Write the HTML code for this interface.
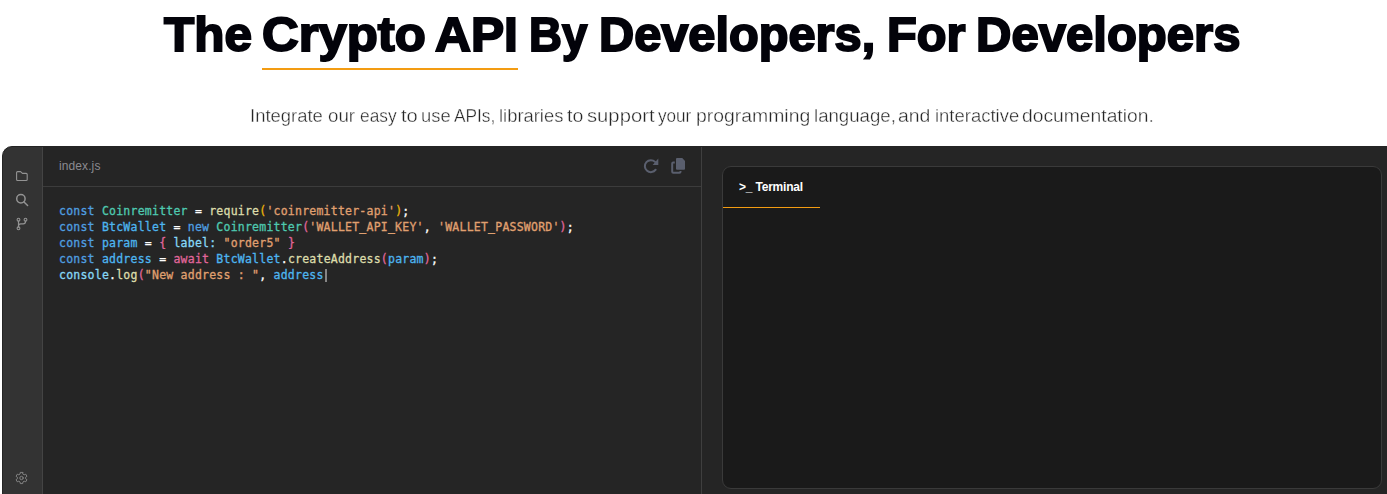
<!DOCTYPE html>
<html lang="en">
<head>
<meta charset="utf-8">
<title>The Crypto API By Developers, For Developers</title>
<style>
*{box-sizing:border-box;margin:0;padding:0}
html,body{width:1387px;height:494px;overflow:hidden;background:#fff}
body{position:relative;font-family:"Liberation Sans",sans-serif}
h1{will-change:transform;position:absolute;left:0;top:4.1px;width:1387px;height:60px;font-weight:700;font-size:49px;line-height:60px;color:#03030a;white-space:nowrap;-webkit-text-stroke:2px #03030a}
h1 span{position:absolute;top:0;display:block;transform-origin:0 47.43px}
.uline{position:absolute;left:262px;top:68px;width:256px;height:2px;background:#f39c12}
p.sub{will-change:transform;position:absolute;left:0;top:104.3px;width:1387px;height:24px;font-size:17.6px;line-height:24px;color:#262626;white-space:nowrap;-webkit-text-stroke:0.35px #fff}
p.sub span{position:absolute;top:0;display:block;transform-origin:0 0}
.panel{position:absolute;left:2px;top:146px;width:1390px;height:360px;background:#252525;border-top-left-radius:10px;overflow:hidden;border:1px solid #242424}
.side{position:absolute;left:0;top:0;width:40px;height:100%;background:#333333;border-right:1px solid #444}
svg.ico{position:absolute;left:-3px;top:-1px;display:block}
svg.hic{position:absolute;left:635px;top:3px;display:block}
.head{position:absolute;left:40px;top:0;width:658px;height:40px;border-bottom:1px solid #3c3c3c}
.head .fn{position:absolute;left:16px;top:11px;font-size:12px;line-height:16px;color:#8b8b90;letter-spacing:0.1px}
.vdiv{position:absolute;left:698px;top:0;width:1px;height:100%;background:#3f3f3f}
pre.code{position:absolute;left:56px;top:56px;font-family:"DejaVu Sans Mono","Liberation Mono",monospace;font-size:11.5px;letter-spacing:0.227px;line-height:16px;color:#ffffff;white-space:pre;-webkit-text-stroke-width:0.3px}
.k{color:#4f9fe0}.c{color:#4ec9b0}.v{color:#4db5f0}.f{color:#dcdcaa}.s{color:#e0a070}.y{color:#eab308}.p{color:#e0659a}.l{color:#86d8f7}.a{color:#e0659a}
.cur{display:inline-block;width:2px;height:13px;background:#858585;vertical-align:-3px;margin-left:1.5px}
.term{position:absolute;left:719px;top:19px;width:660px;height:323px;background:#1a1a1a;border:1px solid #3a3a3a;border-radius:9px;overflow:hidden}
.tab{position:absolute;left:0;top:0;width:97px;height:41px;border-bottom:1px solid #f39c12;color:#fff;font-size:12px;font-weight:700;line-height:16px;padding:12px 0 0 16px;white-space:nowrap;letter-spacing:-0.2px}
</style>
</head>
<body>
<h1><span style="left:164.10px;transform:scaleX(1.0101)">The</span> <span style="left:261.77px;transform:scaleX(1.0376)">Crypto</span> <span style="left:434.62px;transform:scaleX(1.0143)">API</span> <span style="left:528.74px;transform:scaleX(0.9302)">By</span> <span style="left:599.48px;transform:scaleX(0.9941)">Developers,</span> <span style="left:886.83px;transform:scaleX(0.9942)">For</span> <span style="left:976.04px;transform:scaleX(1.0010)">Developers</span></h1>
<div class="uline"></div>
<p class="sub"><span style="left:250.40px;transform:scaleX(1.0492)">Integrate</span> <span style="left:328.11px;transform:scaleX(1.0646)">our</span> <span style="left:359.82px;transform:scaleX(0.9855)">easy</span> <span style="left:400.95px;transform:scaleX(1.1451)">to</span> <span style="left:421.04px;transform:scaleX(1.0450)">use</span> <span style="left:454.36px;transform:scaleX(0.9823)">APIs,</span> <span style="left:498.85px;transform:scaleX(1.0447)">libraries</span> <span style="left:567.45px;transform:scaleX(1.1090)">to</span> <span style="left:587.15px;transform:scaleX(1.1503)">support</span> <span style="left:657.84px;transform:scaleX(0.9722)">your</span> <span style="left:695.50px;transform:scaleX(1.1021)">programming</span> <span style="left:813.72px;transform:scaleX(1.0586)">language,</span> <span style="left:897.81px;transform:scaleX(1.1026)">and</span> <span style="left:934.70px;transform:scaleX(1.0494)">interactive</span> <span style="left:1022.22px;transform:scaleX(1.0953)">documentation.</span></p>
<div class="panel">
  <div class="side"></div>
  <svg class="ico" width="45" height="348" viewBox="0 146 45 348" fill="none" stroke="#939393" stroke-width="1.1" stroke-linecap="round" stroke-linejoin="round">
<path d="M16.6 172.6 Q16.6 171.6 17.6 171.6 H20.6 L22.4 173.4 H26.2 Q27.2 173.4 27.2 174.4 V179.5 Q27.2 180.5 26.2 180.5 H17.6 Q16.6 180.5 16.6 179.5 Z"/>
<circle cx="20.9" cy="198.8" r="4.2" stroke-width="1.5"/><path d="M24 202 L27.6 205.5" stroke-width="1.5"/>
<circle cx="18.5" cy="219.7" r="1.4" stroke-width="1.1"/><circle cx="25.5" cy="219.7" r="1.4" stroke-width="1.1"/><circle cx="18.5" cy="228.3" r="1.4" stroke-width="1.1"/>
<path d="M18.5 221 V227 M25.5 221 V221.6 Q25.5 223.9 23.2 223.9 H20.8 Q18.5 223.9 18.5 226" stroke-width="1.2"/>
<path d="M22.69 472.42 L20.31 472.42 L20.06 474.05 L18.80 474.78 L17.26 474.19 L16.08 476.24 L17.36 477.27 L17.36 478.73 L16.08 479.76 L17.26 481.81 L18.80 481.22 L20.06 481.95 L20.31 483.58 L22.69 483.58 L22.94 481.95 L24.20 481.22 L25.74 481.81 L26.92 479.76 L25.64 478.73 L25.64 477.27 L26.92 476.24 L25.74 474.19 L24.20 474.78 L22.94 474.05Z" stroke="#8a8a8a" stroke-width="0.9"/><circle cx="21.5" cy="478.0" r="1.7" stroke="#8a8a8a" stroke-width="0.9"/>
</svg>
  <div class="head"><span class="fn">index.js</span></div>
  <pre class="code"><span class="k">const</span> <span class="c">Coinremitter</span> = <span class="f">require</span><span class="y">(</span><span class="s">'coinremitter-api'</span><span class="y">)</span>;
<span class="k">const</span> <span class="v">BtcWallet</span> = <span class="k">new</span> <span class="c">Coinremitter</span><span class="p">(</span><span class="s">'WALLET_API_KEY'</span>, <span class="s">'WALLET_PASSWORD'</span><span class="p">)</span>;
<span class="k">const</span> <span class="v">param</span> = <span class="p">{</span> <span class="l">label:</span> <span class="s">"order5"</span> <span class="p">}</span>
<span class="k">const</span> <span class="v">address</span> = <span class="a">await</span> <span class="v">BtcWallet</span>.<span class="f">createAddress</span><span class="p">(</span><span class="v">param</span><span class="p">)</span>;
<span class="l">console</span>.<span class="f">log</span><span class="p">(</span><span class="s">"New address : "</span>, <span class="v">address</span><span class="cur"></span></pre>
  <svg class="hic" width="60" height="30" viewBox="638 150 60 30" fill="none" stroke="#5a5f6e" stroke-width="2" stroke-linecap="round" stroke-linejoin="round">
<path d="M655.1 161.9 A6 6 0 1 0 655.7 169.7"/><path d="M658.3 158.6 V164.9 H652.6 Z" fill="#5a5f6e" stroke="none"/>
<path d="M677 157.9 H682.3 L685 160.9 V168.8 Q685 169.8 684 169.8 H677 Q676 169.8 676 168.8 V158.9 Q676 157.9 677 157.9 Z" fill="#5a5f6e" stroke="none"/>
<path stroke-linecap="butt" d="M674.8 162.6 H673.2 Q672.2 162.6 672.2 163.6 V171.8 Q672.2 172.8 673.2 172.8 H679.5 Q680.5 172.8 680.5 171.8 V171"/>
</svg>
  <div class="vdiv"></div>
  <div class="term"><div class="tab">&gt;_ Terminal</div></div>
</div>
</body>
</html>
